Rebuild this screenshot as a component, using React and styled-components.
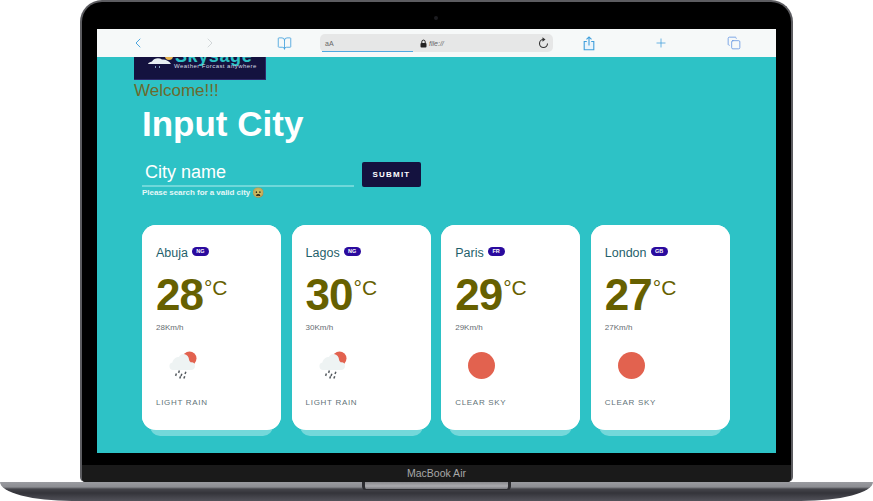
import React from 'react';
import styled, { createGlobalStyle } from 'styled-components';
import { ChevronLeft, ChevronRight, BookOpen, Plus, Copy } from 'lucide-react';

const Global = createGlobalStyle`
  html, body { margin: 0; padding: 0; background: #fff; overflow: hidden; }
  body { font-family: "Liberation Sans", Arial, sans-serif; }
  * { box-sizing: border-box; }
`;
const Stage = styled.div`width: 873px; height: 501px; position: relative; background: #fff; overflow: hidden;`;
const Lid = styled.div`
  position: relative; width: 713px; height: 482px; margin-left: 80px; padding: 27px 15px 0;
  background: #000; border: 2px solid #5c5c60; border-bottom: 0; border-radius: 22px 22px 5px 5px;
  display: flex; flex-direction: column;
`;
const Camera = styled.span`position: absolute; left: 352px; top: 14px; width: 4px; height: 4px; border-radius: 50%; background: #1c1c20;`;
const Screen = styled.div`width: 679px; height: 424px; flex: none; display: flex; flex-direction: column; background: #2dc2c6; overflow: hidden;`;
const Toolbar = styled.div`height: 28px; flex: none; display: flex; align-items: center; padding-left: 5px; background: #f6f9f9; color: #3f9fdc;`;
const Slot = styled.div`width: 72px; flex: none; display: flex; justify-content: center; align-items: center; margin-left: ${p => p.$shift || 0}px; color: ${p => p.$muted ? '#cfd4d6' : 'inherit'};`;
const Address = styled.div`
  position: relative; width: 233px; height: 18px; flex: none; padding: 0 4px 0 5px; display: flex; align-items: center;
  background: #e6e7e7; border-radius: 5px;
`;
const AaLabel = styled.span`font-size: 7px; width: 95px; color: #666;`;
const FileLabel = styled.span`font-size: 7px; font-style: italic; color: #666; margin-left: 2px; flex: 1;`;
const Progress = styled.span`position: absolute; left: 2px; bottom: 0; width: 91px; height: 1px; background: #4fa8e0;`;
const Page = styled.div`flex: 1; min-height: 0; padding-left: 37px; overflow: hidden;`;
const Logo = styled.div`
  width: 132px; height: 23px; background: #14123f; overflow: hidden; display: flex; align-items: flex-end; padding: 0 0 10px 13px; gap: 1px;
  border-right: 1px solid #2d2a6a; border-bottom: 1px solid #2d2a6a;
`;
const LogoWords = styled.div`display: flex; flex-direction: column; align-items: flex-start;`;
const LogoName = styled.div`font-size: 18px; line-height: 8px; font-weight: 700; color: #2dc2c6; letter-spacing: .6px; height: 8px; padding-bottom: 3px; margin-left: 1px; display: flex; align-items: flex-end;`;
const LogoTag = styled.div`font-size: 6px; line-height: 6px; color: #d6dbe4; letter-spacing: .45px; white-space: nowrap;`;
const Welcome = styled.div`font-size: 17px; line-height: 21px; color: #6b6a2e; height: 22px;`;
const Content = styled.div`padding: 1px 0 0 8px;`;
const Title = styled.h1`margin: 0; font-size: 35px; line-height: 42px; font-weight: 700; color: #fff;`;
const FormRow = styled.div`display: flex; align-items: flex-start; margin-top: 17px; gap: 8px;`;
const CityInput = styled.div`width: 212px; height: 25px; padding-left: 3px; font-size: 18px; line-height: 21px; color: #fff; border-bottom: 2px solid #6fd8da;`;
const Submit = styled.button`
  width: 59px; height: 25px; border: 0; border-radius: 2px; padding: 0; background: #14123f; color: #fff;
  font: 700 8px "Liberation Sans", sans-serif; letter-spacing: 1.2px; text-transform: uppercase;
`;
const Hint = styled.div`font-size: 8px; line-height: 11px; font-weight: 700; letter-spacing: -.04px; color: #e4f7f7; display: flex; align-items: center; gap: 2px; height: 13px; margin-top: -1px;`;
const Emoji = styled.span`font-size: 10px; line-height: 11px; filter: saturate(.6) brightness(.85);`;
const Cards = styled.div`display: flex; gap: 10.6px; margin-top: 26px;`;
const Card = styled.div`
  position: relative; width: 139px; height: 205px; padding: 21px 14px 0; background: #fff; border-radius: 14px;
  &::after { content: ""; position: absolute; left: 8px; right: 8px; bottom: -6px; height: 20px; background: #74d8da; border-radius: 0 0 10px 10px; z-index: 0; }
  &::before { content: ""; position: absolute; inset: 0; background: #fff; border-radius: 14px; z-index: 1; }
`;
const CardBody = styled.div`position: relative; z-index: 2;`;
const CityRow = styled.div`display: flex; align-items: flex-start; gap: 4px; height: 16px;`;
const CityName = styled.span`font-size: 12.5px; line-height: 15px; color: #1f5f6b;`;
const Badge = styled.span`width: 17px; height: 9px; margin-top: 1px; border-radius: 5px; background: #2a0a9e; color: #fff; font-size: 5.5px; line-height: 9px; font-weight: 700; text-align: center;`;
const TempRow = styled.div`display: flex; align-items: flex-start; margin-top: 9px; color: #666000; height: 47px;`;
const TempValue = styled.span`font-size: 44px; line-height: 47px; font-weight: 700; letter-spacing: -1px;`;
const TempUnit = styled.span`font-size: 21px; line-height: 24px; margin-left: 1px; margin-top: 5px;`;
const Speed = styled.div`font-size: 8px; line-height: 10px; color: #666d72; margin-top: 5px;`;
const IconBox = styled.div`height: 34px; margin-top: 15px; padding-left: 13px; display: flex; align-items: center;`;
const Sky = styled.div`width: 27px; height: 27px; border-radius: 50%; background: #e2624f;`;
const Desc = styled.div`font-size: 8px; line-height: 10px; letter-spacing: .7px; color: #5f7378; margin-top: 16px; text-transform: uppercase;`;
const Chin = styled.div`margin: 12px -15px 0; height: 17px; flex: none; background: #1a1a1a; color: #a8a8a8; font-size: 10.5px; line-height: 17px; text-align: center; border-radius: 0 0 4px 4px;`;
const Base = styled.div`
  position: absolute; left: 0; top: 482px; width: 873px; height: 19px;
  border-radius: 0 0 72px 72px / 0 0 19px 19px;
  background: linear-gradient(#9a9ba0 0, #8c8d92 5px, #44444a 7px, #34343a 11px, #52525a 19px);
`;
const Notch = styled.div`
  position: absolute; left: 362px; top: 0; width: 149px; height: 8px; border-radius: 0 0 4px 4px;
  background: linear-gradient(#8a8a8e, #aaaaae 60%, #77777c); border: 1px solid #2c2c30; border-top: 0; border-left-width: 3px; border-right-width: 3px;
`;

const Lock = () => (
  <svg width="7" height="9" viewBox="0 0 7 9">
    <path d="M1.800 4V2.800a1.700 1.700 0 0 1 3.400 0V4" fill="none" stroke="#222" strokeWidth="1" />
    <rect x="0.500" y="4" width="6" height="4.500" rx="1" fill="#222" />
  </svg>
);
const Reload = () => (
  <svg width="11" height="12" viewBox="0 0 11 12">
    <path d="M5.500 2.500a4 4 0 1 0 4 4" fill="none" stroke="#333" strokeWidth="1.100" />
    <path d="M4.500 .3 7.500 2.500 4.500 4.700z" fill="#333" />
  </svg>
);
const ShareIcon = () => (
  <svg width="12" height="15" viewBox="0 0 12 15" fill="none" stroke="currentColor" strokeWidth="1.100">
    <path d="M3.800 5.500H1.200v8.300h9.600V5.500H8.200" fill="#eaf4fb" />
    <path d="M6 9.500V1M3.500 3.300 6 .9l2.500 2.400" />
  </svg>
);
const RainCloud = () => (
  <svg width="30" height="28" viewBox="0 0 30 28">
    <circle cx="20.500" cy="7.500" r="7" fill="#e2624f" />
    <path d="M4 19a3.800 3.800 0 0 1-.6-7.500C4 8 7 6 10 6c.8-2.400 3-3.200 5-3 3 .5 5 3 5 5.600 .4 1.600 .8 2.200 2 2.800 2.400-.4 4 1.200 4 3.600S24.400 19 22 19z" fill="#eef3f3" />
    <g fill="#555b60">
      <rect x="9.500" y="19.500" width="1.500" height="2.400" transform="rotate(20 10 20)" />
      <rect x="6.500" y="22.500" width="1.500" height="2.400" transform="rotate(20 7 23)" />
      <rect x="12" y="22.500" width="1.500" height="2.400" transform="rotate(20 12 23)" />
      <rect x="16" y="20.500" width="1.500" height="2.400" transform="rotate(20 16 21)" />
      <rect x="15" y="25" width="1.500" height="2.400" transform="rotate(20 15 25)" />
      <rect x="10.500" y="25" width="1.500" height="2.400" transform="rotate(20 11 26)" />
    </g>
  </svg>
);
const LogoCloud = () => (
  <svg width="26" height="13" viewBox="0 0 26 13" style={{ flex: 'none' }}>
    <circle cx="22" cy="0" r="4" fill="#e8b652" />
    <path d="M1 8c.5-1.500 2-2 4-2.500C7 2 12 1.500 15 3.500c3-.5 7 1 9 4.500z" fill="#e8eef2" />
    <rect x="8" y="10" width="1" height="2" fill="#7f9fc0" />
    <rect x="12" y="10" width="1" height="2" fill="#7f9fc0" />
  </svg>
);

const cities = [
  { name: 'Abuja', cc: 'NG', temp: 28, speed: '28Km/h', desc: 'Light rain', rain: true },
  { name: 'Lagos', cc: 'NG', temp: 30, speed: '30Km/h', desc: 'Light rain', rain: true },
  { name: 'Paris', cc: 'FR', temp: 29, speed: '29Km/h', desc: 'Clear sky', rain: false },
  { name: 'London', cc: 'GB', temp: 27, speed: '27Km/h', desc: 'Clear sky', rain: false },
];

export default function App() {
  return (
    <Stage>
      <Global />
      <Lid>
        <Camera />
        <Screen>
          <Toolbar>
            <Slot><ChevronLeft size={16} strokeWidth={1.4} /></Slot>
            <Slot $muted><ChevronRight size={16} strokeWidth={1.4} /></Slot>
            <Slot $shift={2}><BookOpen size={15} strokeWidth={1.3} /></Slot>
            <Address>
              <AaLabel>aA</AaLabel>
              <Lock />
              <FileLabel>file://</FileLabel>
              <Reload />
              <Progress />
            </Address>
            <Slot><ShareIcon /></Slot>
            <Slot><Plus size={14} strokeWidth={1.3} /></Slot>
            <Slot $shift={1}><Copy size={14} strokeWidth={1.3} color="#5a8fe0" /></Slot>
          </Toolbar>
          <Page>
            <Logo>
              <LogoCloud />
              <LogoWords>
                <LogoName>Skysage</LogoName>
                <LogoTag>Weather Forcast anywhere</LogoTag>
              </LogoWords>
            </Logo>
            <Welcome>Welcome!!!</Welcome>
            <Content>
              <Title>Input City</Title>
              <FormRow>
                <CityInput>City name</CityInput>
                <Submit>Submit</Submit>
              </FormRow>
              <Hint>Please search for a valid city <Emoji role="img">😦</Emoji></Hint>
              <Cards>
                {cities.map(c => (
                  <Card key={c.name}>
                    <CardBody>
                      <CityRow><CityName>{c.name}</CityName><Badge>{c.cc}</Badge></CityRow>
                      <TempRow><TempValue>{c.temp}</TempValue><TempUnit>°C</TempUnit></TempRow>
                      <Speed>{c.speed}</Speed>
                      <IconBox>{c.rain ? <RainCloud /> : <Sky />}</IconBox>
                      <Desc>{c.desc}</Desc>
                    </CardBody>
                  </Card>
                ))}
              </Cards>
            </Content>
          </Page>
        </Screen>
        <Chin>MacBook Air</Chin>
      </Lid>
      <Base><Notch /></Base>
    </Stage>
  );
}
